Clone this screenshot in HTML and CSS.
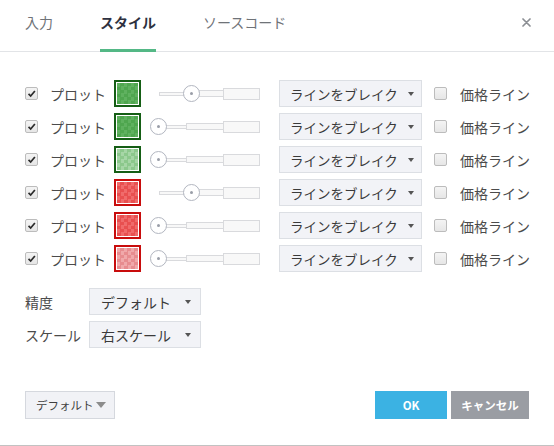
FILE: index.html
```html
<!DOCTYPE html>
<html lang="ja">
<head>
<meta charset="utf-8">
<link rel="stylesheet" href="styles.css">
</head>
<body>
<div class="dialog">
  <div class="header">
    <div class="tab">入力</div>
    <div class="tab active">スタイル</div>
    <div class="tab">ソースコード</div>
    <div class="close">
      <svg width="9" height="9" viewBox="0 0 9 9"><path d="M1 1L8 8M8 1L1 8" stroke="#8c8f94" stroke-width="1.7" stroke-linecap="round"/></svg>
    </div>
  </div>

  <div class="content">
    <div class="plots">
      <div class="row">
        <span class="cb checked"><svg viewBox="0 0 13 13"><path d="M3 7L5.5 9.5L10.5 3.5" fill="none" stroke="#2b2b2b" stroke-width="2"/></svg></span>
        <span class="label">プロット</span>
        <span class="swatch green"><span class="fill g1"></span></span>
        <span class="slider"><span class="seg s1"></span><span class="seg s2"></span><span class="seg s3"></span><span class="knob mid"></span></span>
        <span class="select wide"><span class="txt">ラインをブレイク</span><span class="caret"></span></span>
        <span class="cb"></span>
        <span class="label2">価格ライン</span>
      </div>
      <div class="row">
        <span class="cb checked"><svg viewBox="0 0 13 13"><path d="M3 7L5.5 9.5L10.5 3.5" fill="none" stroke="#2b2b2b" stroke-width="2"/></svg></span>
        <span class="label">プロット</span>
        <span class="swatch green"><span class="fill g1"></span></span>
        <span class="slider"><span class="seg s1"></span><span class="seg s2"></span><span class="seg s3"></span><span class="knob start"></span></span>
        <span class="select wide"><span class="txt">ラインをブレイク</span><span class="caret"></span></span>
        <span class="cb"></span>
        <span class="label2">価格ライン</span>
      </div>
      <div class="row">
        <span class="cb checked"><svg viewBox="0 0 13 13"><path d="M3 7L5.5 9.5L10.5 3.5" fill="none" stroke="#2b2b2b" stroke-width="2"/></svg></span>
        <span class="label">プロット</span>
        <span class="swatch green"><span class="fill g2"></span></span>
        <span class="slider"><span class="seg s1"></span><span class="seg s2"></span><span class="seg s3"></span><span class="knob start"></span></span>
        <span class="select wide"><span class="txt">ラインをブレイク</span><span class="caret"></span></span>
        <span class="cb"></span>
        <span class="label2">価格ライン</span>
      </div>
      <div class="row">
        <span class="cb checked"><svg viewBox="0 0 13 13"><path d="M3 7L5.5 9.5L10.5 3.5" fill="none" stroke="#2b2b2b" stroke-width="2"/></svg></span>
        <span class="label">プロット</span>
        <span class="swatch red"><span class="fill r1"></span></span>
        <span class="slider"><span class="seg s1"></span><span class="seg s2"></span><span class="seg s3"></span><span class="knob mid"></span></span>
        <span class="select wide"><span class="txt">ラインをブレイク</span><span class="caret"></span></span>
        <span class="cb"></span>
        <span class="label2">価格ライン</span>
      </div>
      <div class="row">
        <span class="cb checked"><svg viewBox="0 0 13 13"><path d="M3 7L5.5 9.5L10.5 3.5" fill="none" stroke="#2b2b2b" stroke-width="2"/></svg></span>
        <span class="label">プロット</span>
        <span class="swatch red"><span class="fill r1"></span></span>
        <span class="slider"><span class="seg s1"></span><span class="seg s2"></span><span class="seg s3"></span><span class="knob start"></span></span>
        <span class="select wide"><span class="txt">ラインをブレイク</span><span class="caret"></span></span>
        <span class="cb"></span>
        <span class="label2">価格ライン</span>
      </div>
      <div class="row">
        <span class="cb checked"><svg viewBox="0 0 13 13"><path d="M3 7L5.5 9.5L10.5 3.5" fill="none" stroke="#2b2b2b" stroke-width="2"/></svg></span>
        <span class="label">プロット</span>
        <span class="swatch red"><span class="fill r2"></span></span>
        <span class="slider"><span class="seg s1"></span><span class="seg s2"></span><span class="seg s3"></span><span class="knob start"></span></span>
        <span class="select wide"><span class="txt">ラインをブレイク</span><span class="caret"></span></span>
        <span class="cb"></span>
        <span class="label2">価格ライン</span>
      </div>
    </div>

    <div class="setting">
      <span class="slabel">精度</span>
      <span class="select narrow"><span class="txt">デフォルト</span><span class="caret"></span></span>
    </div>
    <div class="setting">
      <span class="slabel">スケール</span>
      <span class="select narrow"><span class="txt">右スケール</span><span class="caret"></span></span>
    </div>
  </div>

  <div class="footer">
    <div class="btn-default"><span>デフォルト</span><span class="caret2"></span></div>
    <div class="btn ok">OK</div>
    <div class="btn cancel">キャンセル</div>
  </div>
</div>
</body>
</html>
```

FILE: styles.css
```css
html, body {
  margin: 0;
  padding: 0;
}
body {
  width: 554px;
  height: 446px;
  overflow: hidden;
  background: #fff;
  font-family: "Noto Sans CJK JP", "Noto Sans", sans-serif;
  color: #4a4a4a;
}
.dialog {
  height: 446px;
  box-sizing: border-box;
  border-bottom: 1px solid #c2c2c2;
  display: flex;
  flex-direction: column;
}
.header {
  height: 52px;
  box-sizing: border-box;
  border-bottom: 1px solid #e2e4e7;
  display: flex;
  padding: 0 25px;
}
.tab {
  position: relative;
  font-size: 14px;
  line-height: 20px;
  padding-top: 12px;
  margin-right: 47px;
  color: #6f7378;
  white-space: nowrap;
}
.tab.active {
  font-weight: bold;
  color: #2e3140;
}
.tab.active::after {
  content: "";
  position: absolute;
  left: 0;
  right: 0;
  bottom: -1px;
  height: 3px;
  background: #54b886;
}
.close {
  margin-left: auto;
  margin-right: -2px;
  padding-top: 18px;
  display: flex;
  align-items: flex-start;
}
.content {
  padding: 28px 25px 0;
}
.plots {
  display: flex;
  flex-direction: column;
  gap: 6px;
  margin-bottom: 16px;
}
.row {
  display: flex;
  align-items: center;
  height: 27px;
  font-size: 14px;
  line-height: 20px;
  white-space: nowrap;
}
.row > *, .setting > * {
  flex-shrink: 0;
}
.cb {
  width: 13px;
  height: 13px;
  box-sizing: border-box;
  border: 1px solid #bcbcbc;
  border-radius: 2px;
  background: linear-gradient(#f4f4f4, #e6e6e6);
  display: inline-flex;
}
.cb svg {
  width: 11px;
  height: 11px;
}
.label {
  width: 64px;
  margin-left: 12px;
  color: #4b4b4b;
}
.swatch {
  width: 27px;
  height: 27px;
  box-sizing: border-box;
  border: 2px solid;
  padding: 1px;
  background: #fff;
  display: flex;
}
.swatch.green { border-color: #155e15; }
.swatch.red { border-color: #c80c0c; }
.fill {
  flex: 1;
  background-size: 7px 7px;
  background-position: 0 0;
}
.g1 { background-color: #5fb15f; background-image: conic-gradient(#4fa64f 25%, transparent 25% 50%, #4fa64f 50% 75%, transparent 75%); }
.g2 { background-color: #a6d6a6; background-image: conic-gradient(#8cc88c 25%, transparent 25% 50%, #8cc88c 50% 75%, transparent 75%); }
.r1 { background-color: #f06b6b; background-image: conic-gradient(#e85050 25%, transparent 25% 50%, #e85050 50% 75%, transparent 75%); }
.r2 { background-color: #f0a8aa; background-image: conic-gradient(#e78c8f 25%, transparent 25% 50%, #e78c8f 50% 75%, transparent 75%); }
.slider {
  position: relative;
  width: 110px;
  height: 27px;
  margin-left: 9px;
  padding-left: 9px;
  box-sizing: border-box;
  display: flex;
  align-items: center;
}
.seg {
  box-sizing: border-box;
  border: 1px solid #d9dadd;
  background: #f8f8f8;
}
.s1 { width: 28px; height: 4px; }
.s2 { width: 38px; height: 7px; margin-left: -1px; }
.s3 { width: 37px; height: 12px; margin-left: -1px; }
.knob {
  position: absolute;
  top: 5px;
  width: 17px;
  height: 17px;
  box-sizing: border-box;
  border: 1px solid #b2b6c0;
  border-radius: 50%;
  background: #fff;
  display: flex;
  align-items: center;
  justify-content: center;
}
.knob::after {
  content: "";
  width: 3px;
  height: 3px;
  border-radius: 50%;
  background: #9a9ea8;
}
.knob.start { left: 0; }
.knob.mid { left: 33px; }
.select {
  height: 27px;
  box-sizing: border-box;
  border: 1px solid #dcdfe4;
  background: #f2f3f7;
  display: flex;
  align-items: center;
  color: #3a3a3a;
  white-space: nowrap;
}
.select.wide {
  width: 143px;
  margin-left: 19px;
  padding: 0 7px 0 10px;
  font-size: 13.5px;
  margin-right: 12px;
}
.select.narrow {
  width: 112px;
  padding: 0 9px 0 11px;
  font-size: 14px;
}
.caret {
  margin-left: auto;
  width: 0;
  height: 0;
  border-left: 3.5px solid transparent;
  border-right: 3.5px solid transparent;
  border-top: 4px solid #555;
}
.label2 {
  margin-left: 13px;
  color: #4b4b4b;
}
.setting {
  display: flex;
  align-items: center;
  height: 27px;
  margin-bottom: 6px;
  font-size: 14px;
  line-height: 20px;
  white-space: nowrap;
}
.slabel {
  width: 64px;
  color: #4b4b4b;
}
.footer {
  margin-top: auto;
  display: flex;
  align-items: center;
  padding: 0 25px 26px;
  gap: 4px;
}
.btn-default {
  width: 90px;
  height: 28px;
  box-sizing: border-box;
  border: 1px solid #d5d8de;
  background: #f1f2f6;
  display: flex;
  align-items: center;
  padding: 0 8px 0 10px;
  font-size: 11.5px;
  color: #3f3f3f;
  margin-right: auto;
  white-space: nowrap;
}
.caret2 {
  margin-left: auto;
  width: 0;
  height: 0;
  border-left: 5px solid transparent;
  border-right: 5px solid transparent;
  border-top: 6px solid #8c8c8c;
}
.btn {
  height: 28px;
  display: flex;
  align-items: center;
  justify-content: center;
  color: #fff;
  font-weight: bold;
  font-size: 11.5px;
  white-space: nowrap;
}
.ok {
  width: 72px;
  background: #3bb2e3;
}
.cancel {
  width: 78px;
  background: #9a9da3;
}
```
